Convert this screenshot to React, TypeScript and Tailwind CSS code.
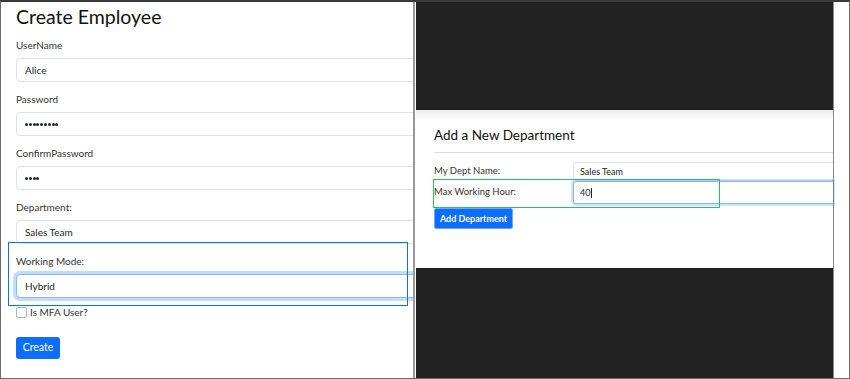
import React from "react";

const font = { fontFamily: 'Lato, "Noto Sans", Arial, sans-serif' };

function Dots({ n }: { n: number }) {
  return (
    <span className="flex gap-[0.8px]">
      {Array.from({ length: n }).map((_, i) => (
        <span key={i} className="w-[3px] h-[3px] rounded-full bg-[#212529]" />
      ))}
    </span>
  );
}

function Field({
  label,
  children,
  focused,
}: {
  label: string;
  children: React.ReactNode;
  focused?: boolean;
}) {
  return (
    <div className="mb-[9px]">
      <div className="h-4 leading-4 text-[10px] text-[#333] mb-[5px]">{label}</div>
      <div
        className={`w-[420px] h-6 rounded-[4px] border bg-white pl-2 flex items-center text-[10px] text-[#212529] ${
          focused
            ? "border-[#86b7fe] shadow-[0_0_0_3px_rgba(13,110,253,0.25)]"
            : "border-[#dee2e6]"
        }`}
      >
        {children}
      </div>
    </div>
  );
}

export default function App() {
  return (
    <div
      style={font}
      className="relative w-[850px] h-[379px] flex bg-white border border-[#6b6b6b] border-t-2 border-t-[#3a3a3a] overflow-hidden"
    >
      {/* left: create employee form */}
      <div className="relative w-[414px] h-full bg-white overflow-hidden pl-[15px] border-r-2 border-[#9a9a9a]">
        <h1 className="text-[19.5px] leading-7 text-[#111] pt-[1px] mb-[6px]">Create Employee</h1>
        <Field label="UserName">Alice</Field>
        <Field label="Password">
          <Dots n={9} />
        </Field>
        <Field label="ConfirmPassword">
          <Dots n={4} />
        </Field>
        <Field label="Department:">Sales Team</Field>
        <Field label="Working Mode:" focused>
          Hybrid
        </Field>
        <div className="flex items-center gap-[3px] -mt-[2px] text-[10px] text-[#333]">
          <span className="w-[11px] h-[11px] rounded-[2px] border border-[#adb5bd] bg-white" />
          <span>Is MFA User?</span>
        </div>
        <button className="mt-[17px] w-[44px] h-[22px] rounded-[3px] bg-[#0d6efd] text-white text-[10.5px]">
          Create
        </button>
        <div className="absolute left-[7px] top-[240px] w-[400px] h-[64px] border border-[#0078d4]" />
      </div>

      {/* right: add department dialog */}
      <div className="w-[418px] h-full bg-[#222222] border-l border-white pt-[108px]">
        <div className="relative h-[158px] pl-[18px] pt-[15px] bg-gradient-to-b from-[#ececec] to-white to-[10px]">
          <h2 className="text-[13.5px] leading-5 text-[#111] mb-[7px]">Add a New Department</h2>
          <div className="h-px bg-[#dcdcdc] mb-[9px]" />
          <div className="flex items-center h-[19px]">
            <span className="w-[139px] text-[9.5px] text-[#333]">My Dept Name:</span>
            <div className="flex-1 h-[19px] border border-[#e3e3e3] border-r-0 rounded-l-[3px] pl-[6px] flex items-center text-[9px] text-[#212529]">
              Sales Team
            </div>
          </div>
          <div className="flex items-center h-[23px]">
            <span className="w-[139px] text-[9.5px] text-[#333]">Max Working Hour:</span>
            <div className="flex-1 h-[23px] border border-[#86b7fe] border-r-0 rounded-l-[3px] shadow-[0_0_0_2px_rgba(13,110,253,0.2)] pl-[6px] flex items-center text-[9px] text-[#212529]">
              40<span className="w-px h-[10px] bg-[#222] ml-px" />
            </div>
          </div>
          <button className="relative z-10 mt-[-1px] w-[79px] h-[21px] rounded-[2px] bg-[#0d6efd] text-white text-[9px] font-bold border border-[#6ea8fe]">
            Add Department
          </button>
        </div>
      </div>

      {/* right edge strip */}
      <div className="flex-1 h-full bg-white border-l border-[#8a8a8a]" />

      {/* annotation over the dialog row */}
      <div className="absolute left-[432px] top-[177px] w-[287px] h-[29px] border border-[#22c55e]" />
    </div>
  );
}
